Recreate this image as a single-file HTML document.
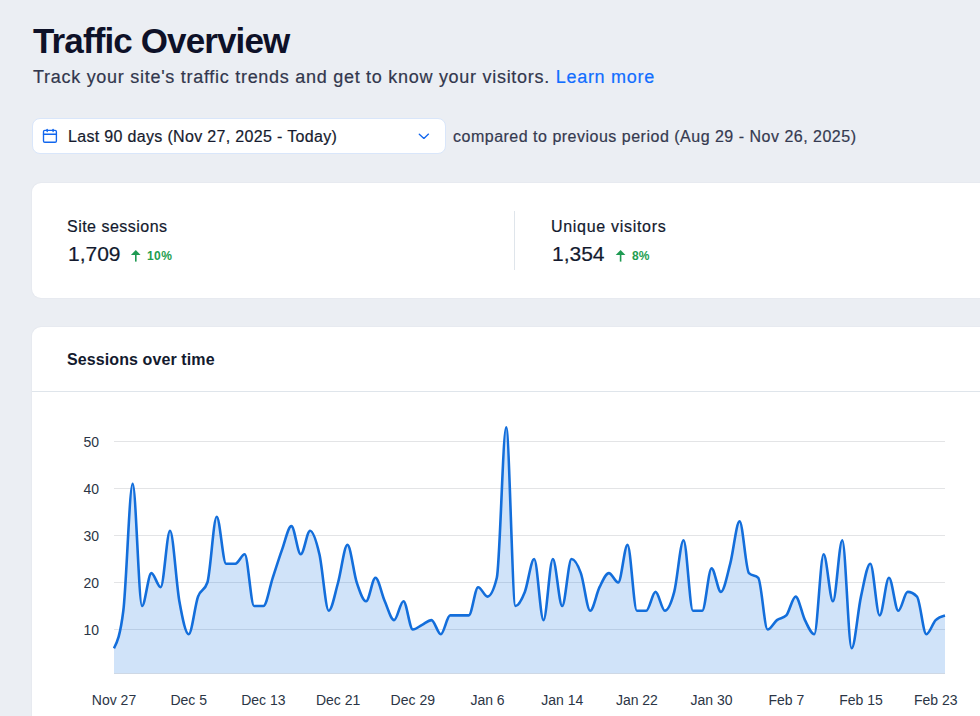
<!DOCTYPE html>
<html><head><meta charset="utf-8">
<style>
html,body{margin:0;padding:0;}
body{width:980px;height:716px;overflow:hidden;background:#EBEEF3;font-family:"Liberation Sans",sans-serif;position:relative;color:#131720;}
.abs{position:absolute;white-space:nowrap;-webkit-text-stroke:0.2px currentColor;}
#title,#ctitle,.pct{-webkit-text-stroke:0;}
#title{left:33px;top:20.5px;font-size:35px;font-weight:bold;line-height:40px;color:#0E1128;letter-spacing:-0.88px;}
#sub{left:33px;top:65px;font-size:18px;line-height:24px;color:#32374D;letter-spacing:0.72px;}
#sub a{color:#116DFF;text-decoration:none;}
#picker{left:31.5px;top:118px;width:412.5px;height:34px;background:#fff;border:1px solid #D9E6FA;border-radius:8px;box-sizing:content-box;}
#pickertxt{left:68px;top:127px;font-size:16px;line-height:20px;color:#161B2E;letter-spacing:0.33px;}
#cmp{left:453px;top:127px;font-size:16px;line-height:20px;color:#353A50;letter-spacing:0.5px;}
#card1{left:31.5px;top:182.8px;width:1000px;height:115.2px;background:#fff;border-radius:9px;box-shadow:0 0 2px rgba(20,40,80,0.07);}
#card2{left:31.5px;top:327px;width:1000px;height:420px;background:#fff;border-radius:9px;box-shadow:0 0 2px rgba(20,40,80,0.07);}
#div1{left:514px;top:211px;width:1px;height:59px;background:#DFE5EB;}
#hdiv{left:32px;top:390.5px;width:950px;height:1px;background:#DFE5EB;}
.lbl{font-size:16px;line-height:20px;color:#131A2E;}
.num{font-size:21px;line-height:26px;color:#131A2E;}
.pct{font-size:12px;font-weight:bold;line-height:14px;color:#1E9E50;}
#s1l{left:67px;top:217px;letter-spacing:0.48px;}
#s1n{left:68px;top:240.5px;}
#s1p{left:147px;top:249px;letter-spacing:0.4px;}
#s2l{left:551px;top:217px;letter-spacing:0.7px;}
#s2n{left:552px;top:240.5px;}
#s2p{left:632px;top:249px;}
#ctitle{left:67px;top:350px;font-size:16px;font-weight:bold;line-height:20px;color:#131A2E;letter-spacing:0.1px;}
svg{position:absolute;left:0;top:0;}
</style></head><body>
<div id="title" class="abs">Traffic Overview</div>
<div id="sub" class="abs">Track your site's traffic trends and get to know your visitors. <a>Learn more</a></div>
<div id="picker" class="abs"></div>
<svg width="980" height="716" style="pointer-events:none">
<g fill="none" stroke="#1166EE" stroke-width="1.35" stroke-linecap="round" stroke-linejoin="round">
<rect x="43.5" y="130.4" width="12.9" height="11.9" rx="1.3"/>
<line x1="43.5" y1="134.2" x2="56.4" y2="134.2"/>
<line x1="47.2" y1="129.3" x2="47.2" y2="131.6"/>
<line x1="53.1" y1="129.3" x2="53.1" y2="131.6"/>
<path d="M419.3,134.2L423.9,138.4L428.5,134.1"/>
</g>
</svg>
<div id="pickertxt" class="abs">Last 90 days (Nov 27, 2025 - Today)</div>
<div id="cmp" class="abs">compared to previous period (Aug 29 - Nov 26, 2025)</div>
<div id="card1" class="abs"></div>
<div id="div1" class="abs"></div>
<div id="s1l" class="abs lbl">Site sessions</div>
<div id="s1n" class="abs num">1,709</div>
<div id="s1p" class="abs pct">10%</div>
<div id="s2l" class="abs lbl">Unique visitors</div>
<div id="s2n" class="abs num">1,354</div>
<div id="s2p" class="abs pct">8%</div>
<div id="card2" class="abs"></div>
<div id="hdiv" class="abs"></div>
<div id="ctitle" class="abs">Sessions over time</div>
<svg width="980" height="716">
<g fill="#1E9A52" stroke="none">
<path d="M135.8,250L140.6,254.9L130.9,254.9Z"/><rect x="135" y="254" width="1.6" height="7.6"/>
<path d="M620.6,250L625.4,254.9L615.7,254.9Z"/><rect x="619.8" y="254" width="1.6" height="7.6"/>
</g>
<g stroke="#E3E4E6" stroke-width="1"><line x1="114.0" y1="629.5" x2="945.0" y2="629.5"/><line x1="114.0" y1="582.5" x2="945.0" y2="582.5"/><line x1="114.0" y1="535.5" x2="945.0" y2="535.5"/><line x1="114.0" y1="488.5" x2="945.0" y2="488.5"/><line x1="114.0" y1="441.5" x2="945.0" y2="441.5"/><line x1="114" y1="673.5" x2="945" y2="673.5"/></g>
<path d="M114.00,648.30C117.11,642.03 120.22,635.77 123.34,610.70C126.45,585.63 129.56,483.80 132.67,483.80C135.79,483.80 138.90,606.00 142.01,606.00C145.12,606.00 148.24,573.10 151.35,573.10C154.46,573.10 157.57,587.20 160.69,587.20C163.80,587.20 166.91,530.80 170.02,530.80C173.13,530.80 176.25,584.07 179.36,601.30C182.47,618.53 185.58,634.20 188.70,634.20C191.81,634.20 194.92,605.22 198.03,596.60C201.15,587.98 204.26,591.90 207.37,582.50C210.48,573.10 213.60,516.70 216.71,516.70C219.82,516.70 222.93,563.70 226.04,563.70C229.16,563.70 232.27,563.70 235.38,563.70C238.49,563.70 241.61,554.30 244.72,554.30C247.83,554.30 250.94,606.00 254.06,606.00C257.17,606.00 260.28,606.00 263.39,606.00C266.51,606.00 269.62,587.20 272.73,577.80C275.84,568.40 278.96,558.22 282.07,549.60C285.18,540.98 288.29,526.10 291.40,526.10C294.52,526.10 297.63,554.30 300.74,554.30C303.85,554.30 306.97,530.80 310.08,530.80C313.19,530.80 316.30,540.98 319.42,554.30C322.53,567.62 325.64,610.70 328.75,610.70C331.87,610.70 334.98,593.47 338.09,582.50C341.20,571.53 344.31,544.90 347.43,544.90C350.54,544.90 353.65,573.10 356.76,582.50C359.88,591.90 362.99,601.30 366.10,601.30C369.21,601.30 372.33,577.80 375.44,577.80C378.55,577.80 381.66,594.25 384.78,601.30C387.89,608.35 391.00,620.10 394.11,620.10C397.22,620.10 400.34,601.30 403.45,601.30C406.56,601.30 409.67,629.50 412.79,629.50C415.90,629.50 419.01,626.37 422.12,624.80C425.24,623.23 428.35,620.10 431.46,620.10C434.57,620.10 437.69,634.20 440.80,634.20C443.91,634.20 447.02,615.40 450.13,615.40C453.25,615.40 456.36,615.40 459.47,615.40C462.58,615.40 465.70,615.40 468.81,615.40C471.92,615.40 475.03,587.20 478.15,587.20C481.26,587.20 484.37,596.60 487.48,596.60C490.60,596.60 493.71,590.33 496.82,577.80C499.93,565.27 503.04,427.40 506.16,427.40C509.27,427.40 512.38,606.00 515.49,606.00C518.61,606.00 521.72,599.73 524.83,591.90C527.94,584.07 531.06,559.00 534.17,559.00C537.28,559.00 540.39,620.10 543.51,620.10C546.62,620.10 549.73,559.00 552.84,559.00C555.96,559.00 559.07,606.00 562.18,606.00C565.29,606.00 568.40,559.00 571.52,559.00C574.63,559.00 577.74,564.48 580.85,573.10C583.97,581.72 587.08,610.70 590.19,610.70C593.30,610.70 596.42,593.47 599.53,587.20C602.64,580.93 605.75,573.10 608.87,573.10C611.98,573.10 615.09,582.50 618.20,582.50C621.31,582.50 624.43,544.90 627.54,544.90C630.65,544.90 633.76,610.70 636.88,610.70C639.99,610.70 643.10,610.70 646.21,610.70C649.33,610.70 652.44,591.90 655.55,591.90C658.66,591.90 661.78,610.70 664.89,610.70C668.00,610.70 671.11,603.65 674.22,591.90C677.34,580.15 680.45,540.20 683.56,540.20C686.67,540.20 689.79,610.70 692.90,610.70C696.01,610.70 699.12,610.70 702.24,610.70C705.35,610.70 708.46,568.40 711.57,568.40C714.69,568.40 717.80,591.90 720.91,591.90C724.02,591.90 727.13,575.45 730.25,563.70C733.36,551.95 736.47,521.40 739.58,521.40C742.70,521.40 745.81,569.97 748.92,573.10C752.03,576.23 755.15,574.67 758.26,577.80C761.37,580.93 764.48,629.50 767.60,629.50C770.71,629.50 773.82,622.45 776.93,620.10C780.04,617.75 783.16,618.53 786.27,615.40C789.38,612.27 792.49,596.60 795.61,596.60C798.72,596.60 801.83,613.83 804.94,620.10C808.06,626.37 811.17,634.20 814.28,634.20C817.39,634.20 820.51,554.30 823.62,554.30C826.73,554.30 829.84,601.30 832.96,601.30C836.07,601.30 839.18,540.20 842.29,540.20C845.40,540.20 848.52,648.30 851.63,648.30C854.74,648.30 857.85,610.70 860.97,596.60C864.08,582.50 867.19,563.70 870.30,563.70C873.42,563.70 876.53,615.40 879.64,615.40C882.75,615.40 885.87,577.80 888.98,577.80C892.09,577.80 895.20,610.70 898.31,610.70C901.43,610.70 904.54,591.90 907.65,591.90C910.76,591.90 913.88,593.47 916.99,596.60C920.10,599.73 923.21,634.20 926.33,634.20C929.44,634.20 932.55,623.23 935.66,620.10C938.78,616.97 941.89,616.18 945.00,615.40L945.00,673.6L114.00,673.6Z" fill="rgba(20,115,225,0.2)"/>
<path d="M114.00,648.30C117.11,642.03 120.22,635.77 123.34,610.70C126.45,585.63 129.56,483.80 132.67,483.80C135.79,483.80 138.90,606.00 142.01,606.00C145.12,606.00 148.24,573.10 151.35,573.10C154.46,573.10 157.57,587.20 160.69,587.20C163.80,587.20 166.91,530.80 170.02,530.80C173.13,530.80 176.25,584.07 179.36,601.30C182.47,618.53 185.58,634.20 188.70,634.20C191.81,634.20 194.92,605.22 198.03,596.60C201.15,587.98 204.26,591.90 207.37,582.50C210.48,573.10 213.60,516.70 216.71,516.70C219.82,516.70 222.93,563.70 226.04,563.70C229.16,563.70 232.27,563.70 235.38,563.70C238.49,563.70 241.61,554.30 244.72,554.30C247.83,554.30 250.94,606.00 254.06,606.00C257.17,606.00 260.28,606.00 263.39,606.00C266.51,606.00 269.62,587.20 272.73,577.80C275.84,568.40 278.96,558.22 282.07,549.60C285.18,540.98 288.29,526.10 291.40,526.10C294.52,526.10 297.63,554.30 300.74,554.30C303.85,554.30 306.97,530.80 310.08,530.80C313.19,530.80 316.30,540.98 319.42,554.30C322.53,567.62 325.64,610.70 328.75,610.70C331.87,610.70 334.98,593.47 338.09,582.50C341.20,571.53 344.31,544.90 347.43,544.90C350.54,544.90 353.65,573.10 356.76,582.50C359.88,591.90 362.99,601.30 366.10,601.30C369.21,601.30 372.33,577.80 375.44,577.80C378.55,577.80 381.66,594.25 384.78,601.30C387.89,608.35 391.00,620.10 394.11,620.10C397.22,620.10 400.34,601.30 403.45,601.30C406.56,601.30 409.67,629.50 412.79,629.50C415.90,629.50 419.01,626.37 422.12,624.80C425.24,623.23 428.35,620.10 431.46,620.10C434.57,620.10 437.69,634.20 440.80,634.20C443.91,634.20 447.02,615.40 450.13,615.40C453.25,615.40 456.36,615.40 459.47,615.40C462.58,615.40 465.70,615.40 468.81,615.40C471.92,615.40 475.03,587.20 478.15,587.20C481.26,587.20 484.37,596.60 487.48,596.60C490.60,596.60 493.71,590.33 496.82,577.80C499.93,565.27 503.04,427.40 506.16,427.40C509.27,427.40 512.38,606.00 515.49,606.00C518.61,606.00 521.72,599.73 524.83,591.90C527.94,584.07 531.06,559.00 534.17,559.00C537.28,559.00 540.39,620.10 543.51,620.10C546.62,620.10 549.73,559.00 552.84,559.00C555.96,559.00 559.07,606.00 562.18,606.00C565.29,606.00 568.40,559.00 571.52,559.00C574.63,559.00 577.74,564.48 580.85,573.10C583.97,581.72 587.08,610.70 590.19,610.70C593.30,610.70 596.42,593.47 599.53,587.20C602.64,580.93 605.75,573.10 608.87,573.10C611.98,573.10 615.09,582.50 618.20,582.50C621.31,582.50 624.43,544.90 627.54,544.90C630.65,544.90 633.76,610.70 636.88,610.70C639.99,610.70 643.10,610.70 646.21,610.70C649.33,610.70 652.44,591.90 655.55,591.90C658.66,591.90 661.78,610.70 664.89,610.70C668.00,610.70 671.11,603.65 674.22,591.90C677.34,580.15 680.45,540.20 683.56,540.20C686.67,540.20 689.79,610.70 692.90,610.70C696.01,610.70 699.12,610.70 702.24,610.70C705.35,610.70 708.46,568.40 711.57,568.40C714.69,568.40 717.80,591.90 720.91,591.90C724.02,591.90 727.13,575.45 730.25,563.70C733.36,551.95 736.47,521.40 739.58,521.40C742.70,521.40 745.81,569.97 748.92,573.10C752.03,576.23 755.15,574.67 758.26,577.80C761.37,580.93 764.48,629.50 767.60,629.50C770.71,629.50 773.82,622.45 776.93,620.10C780.04,617.75 783.16,618.53 786.27,615.40C789.38,612.27 792.49,596.60 795.61,596.60C798.72,596.60 801.83,613.83 804.94,620.10C808.06,626.37 811.17,634.20 814.28,634.20C817.39,634.20 820.51,554.30 823.62,554.30C826.73,554.30 829.84,601.30 832.96,601.30C836.07,601.30 839.18,540.20 842.29,540.20C845.40,540.20 848.52,648.30 851.63,648.30C854.74,648.30 857.85,610.70 860.97,596.60C864.08,582.50 867.19,563.70 870.30,563.70C873.42,563.70 876.53,615.40 879.64,615.40C882.75,615.40 885.87,577.80 888.98,577.80C892.09,577.80 895.20,610.70 898.31,610.70C901.43,610.70 904.54,591.90 907.65,591.90C910.76,591.90 913.88,593.47 916.99,596.60C920.10,599.73 923.21,634.20 926.33,634.20C929.44,634.20 932.55,623.23 935.66,620.10C938.78,616.97 941.89,616.18 945.00,615.40" fill="none" stroke="#136EDB" stroke-width="2.6" stroke-linejoin="round"/>
<g font-family="Liberation Sans" font-size="14" fill="#2B3545" text-anchor="end"><text x="99" y="634.5">10</text><text x="99" y="587.5">20</text><text x="99" y="540.5">30</text><text x="99" y="493.5">40</text><text x="99" y="446.5">50</text></g>
<g font-family="Liberation Sans" font-size="14" fill="#2B3545" text-anchor="middle"><text x="114.0" y="705">Nov 27</text><text x="188.7" y="705">Dec 5</text><text x="263.4" y="705">Dec 13</text><text x="338.1" y="705">Dec 21</text><text x="412.8" y="705">Dec 29</text><text x="487.5" y="705">Jan 6</text><text x="562.2" y="705">Jan 14</text><text x="636.9" y="705">Jan 22</text><text x="711.6" y="705">Jan 30</text><text x="786.3" y="705">Feb 7</text><text x="861.0" y="705">Feb 15</text><text x="935.7" y="705">Feb 23</text></g>
</svg>
</body></html>
